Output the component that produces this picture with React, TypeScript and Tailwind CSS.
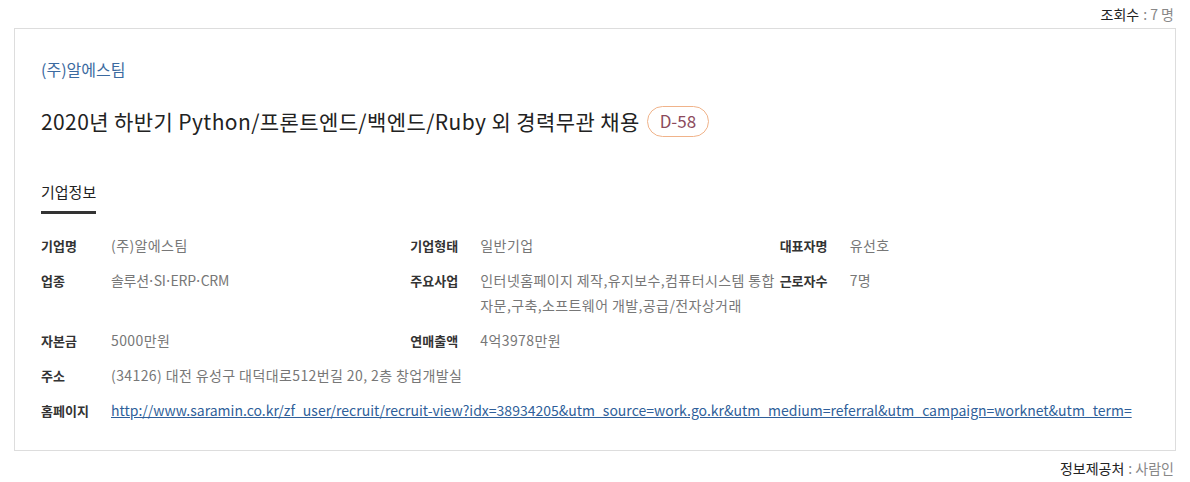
export default function App() {
  const dot = <span className="inline-flex w-[5px] justify-center overflow-hidden tracking-normal">·</span>;
  const rows: { label: string; value: React.ReactNode }[][] = [
    [
      { label: "기업명", value: "(주)알에스팀" },
      { label: "기업형태", value: "일반기업" },
      { label: "대표자명", value: "유선호" },
    ],
    [
      {
        label: "업종",
        value: (
          <span className="tracking-[-0.3px]">
            솔루션{dot}SI{dot}ERP{dot}CRM
          </span>
        ),
      },
      { label: "주요사업", value: "인터넷홈페이지 제작,유지보수,컴퓨터시스템 통합 자문,구축,소프트웨어 개발,공급/전자상거래" },
      { label: "근로자수", value: "7명" },
    ],
    [
      { label: "자본금", value: "5000만원" },
      { label: "연매출액", value: "4억3978만원" },
    ],
  ];

  return (
    <div className="w-[1190px] h-[482px] bg-white text-[#222] px-[14px] font-['Malgun_Gothic','Noto_Sans_CJK_KR',sans-serif]">
      <div className="h-[28px] flex items-center justify-end pr-[2px] text-[14px]">
        <span className="text-[#222]">조회수</span>
        <span className="text-[#888] ml-[4px]">: 7 명</span>
      </div>

      <div className="border border-[#dddddd] pl-[26px] pr-[26px] pt-[26px] pb-[27px]">
        <div className="text-[16px] leading-[28px] text-[#3b6aa0]">(주)알에스팀</div>

        <div className="mt-[18px] flex items-center h-[40px]">
          <h1 className="text-[21px] leading-[30px] text-[#222] tracking-[0.4px]">
            2020년 하반기 Python/프론트엔드/백엔드/Ruby 외 경력무관 채용
          </h1>
          <span className="ml-[7px] h-[31px] px-[12px] rounded-full border border-[#f0b38a] text-[#8c4a5c] text-[17px] flex items-center">
            D-58
          </span>
        </div>

        <div className="mt-[40px] inline-block">
          <div className="text-[15px] leading-[22px] pb-[8px] border-b-[3px] border-[#333]">기업정보</div>
        </div>

        <div className="mt-[19px] leading-[25px] flex flex-col gap-[10px]">
          {rows.map((row, i) => (
            <div key={i} className="grid grid-cols-3">
              {row.map((c) => (
                <div key={c.label} className="flex">
                  <div className="w-[70px] shrink-0 font-bold text-[13px] text-[#333]">{c.label}</div>
                  <div className="text-[#777] text-[14px] tracking-[0.4px] pr-[2px]">{c.value}</div>
                </div>
              ))}
            </div>
          ))}
          <div className="flex">
            <div className="w-[70px] shrink-0 font-bold text-[13px] text-[#333]">주소</div>
            <div className="text-[#777] text-[14px] tracking-[0.4px]">(34126) 대전 유성구 대덕대로512번길 20, 2층 창업개발실</div>
          </div>
          <div className="flex">
            <div className="w-[70px] shrink-0 font-bold text-[13px] text-[#333]">홈페이지</div>
            <a
              href="#"
              className="text-[#2f5f9a] text-[14px] underline whitespace-nowrap"
            >
              http://www.saramin.co.kr/zf_user/recruit/recruit-view?idx=38934205&amp;utm_source=work.go.kr&amp;utm_medium=referral&amp;utm_campaign=worknet&amp;utm_term=
            </a>
          </div>
        </div>
      </div>

      <div className="h-[34px] flex items-center justify-end pr-[2px] text-[14px]">
        <span className="text-[#222]">정보제공처</span>
        <span className="text-[#888] ml-[4px]">: 사람인</span>
      </div>
    </div>
  );
}
